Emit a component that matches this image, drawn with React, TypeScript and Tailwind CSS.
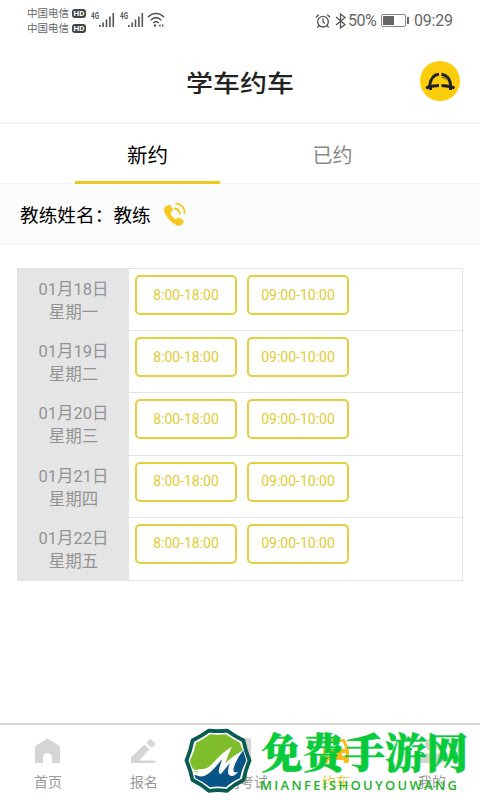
import { AlarmClock } from 'lucide-react';

const days = [
    { date: '01月18日', week: '星期一' },
    { date: '01月19日', week: '星期二' },
    { date: '01月20日', week: '星期三' },
    { date: '01月21日', week: '星期四' },
    { date: '01月22日', week: '星期五' },
];

const slots = ['8:00-18:00', '09:00-10:00'];

function Carrier() {
    return (
        <div className="flex items-center h-[15px] text-[10.5px] leading-[15px] text-[#666]">
            <span className="w-[42px] whitespace-nowrap">中国电信</span>
            <span className="ml-[3px] w-[14px] h-[9px] rounded-[3px] bg-[#444] text-white text-[8px] leading-[9px] font-bold text-center">HD</span>
        </div>
    );
}

function Signal() {
    return (
        <svg className="shrink-0" width="26" height="18" viewBox="0 0 26 18" fill="#555">
            <text x="0" y="8" fontSize="8.5" fontWeight="700" fontFamily="Roboto, sans-serif" textLength="8" lengthAdjust="spacingAndGlyphs">4G</text>
            <rect x="8" y="14" width="1.6" height="2" />
            <rect x="11.3" y="11.5" width="1.6" height="4.5" />
            <rect x="14.7" y="8.5" width="1.6" height="7.5" />
            <rect x="18.1" y="5.5" width="1.6" height="10.5" />
            <rect x="21.5" y="2" width="1.6" height="14" />
        </svg>
    );
}

function StatusBar() {
    return (
        <div className="flex items-start h-10 text-[#666]">
            <div className="ml-[27px] mt-[6px]">
                <Carrier />
                <Carrier />
            </div>
            <div className="flex ml-[5px] mt-[11px]">
                <Signal />
                <div className="ml-[3px] w-[26px]"><Signal /></div>
                <svg className="ml-[1px]" width="19" height="18" viewBox="0 0 19 18" fill="none" stroke="#555" strokeWidth="1.5">
                    <path d="M1 6.2C5.5 1.4 12.5 1.4 17 6.2M3.8 9.2C7 6 11 6 14.2 9.2M6.2 12C8 10.4 10 10.4 11.8 12" />
                    <circle cx="8" cy="14.5" r="1.2" fill="#555" stroke="none" />
                    <path d="M11.5 14.5l2-1.6v3.2zM17 14.5l-2-1.6v3.2z" fill="#555" stroke="none" />
                </svg>
            </div>
            <div className="flex items-center ml-auto mr-[27px] mt-[11px] h-[19px] text-[16px]">
                <AlarmClock className="text-[#555]" size={16} strokeWidth={2} />
                <svg className="ml-[4px]" width="11" height="16" viewBox="0 0 11 16" fill="none" stroke="#555" strokeWidth="1.3">
                    <path d="M1 4L10 11.5L5.5 15V1L10 4.5L1 12" />
                </svg>
                <span className="ml-[2px] w-[30px] tracking-[-0.5px]">50%</span>
                <div className="ml-[3px] w-[25px] h-[13px] rounded-[2px] border border-[#888] p-[1px]">
                    <div className="w-[11px] h-full bg-[#666]" />
                </div>
                <div className="w-[2px] h-[7px] ml-[1px] bg-[#666]" />
                <span className="ml-[5px] w-[39px] tracking-[-0.2px]">09:29</span>
            </div>
        </div>
    );
}

function CarBadge() {
    return (
        <svg width="40" height="40" viewBox="0 0 40 40">
            <circle cx="20" cy="20" r="20" fill="#fbcd0b" />
            <g fill="none" stroke="#222" strokeWidth="3">
                <path d="M9.5 25C10.5 17.5 14 13.7 19 13.3M21.5 13.3C27 14 30 18 30.8 25" />
                <path d="M8.5 25.7C12 25.7 15 24.5 19 24.4M21.5 24.4C25 24.5 28 25.7 32 25.7" />
            </g>
            <path d="M21.5 16.2C23.5 16.5 25 17.3 26.3 18.8" fill="none" stroke="#222" strokeWidth="0.8" />
            <circle cx="7.5" cy="26.5" r="1.8" fill="#222" />
            <circle cx="33" cy="26.5" r="1.8" fill="#222" />
            <path d="M9 25h3v4H9zM29 25h3v4h-3z" fill="#222" />
        </svg>
    );
}

function PhoneIcon() {
    return (
        <svg width="24" height="25" viewBox="0 0 24 25">
            <path
                d="M2.2 4.8L5.5 2.9Q6.8 2.4 7.6 3.6L9.6 7Q10.2 8.2 9 9.2L7.2 10.7C8.2 13.5 10.1 15.7 12.7 17.3L14.6 15.9Q15.7 15.2 16.9 16.1L20 18.3Q21.3 19.3 20.5 20.4C19 22.8 17.2 24.2 14.6 23.4C8.3 21.2 2.7 15 1 8.5Q.6 6 2.2 4.8Z"
                fill="#f7c81c"
            />
            <path d="M11.6 6.5C14.5 6.8 16.6 8.9 16.7 11.8M13.2 1.6C18.5 2 22 6 21.6 11.3" fill="none" stroke="#f7c81c" strokeWidth="1.8" strokeLinecap="round" />
        </svg>
    );
}

const navItems = [
    {
        label: '首页',
        icon: <path d="M12.5 0.5L23.3 7.3Q25 8.3 25 10V25H17V19.5a4.5 4.5 0 0 0-9 0V25H0V10Q0 8.3 1.7 7.3Z" />,
    },
    {
        label: '报名',
        icon: <path d="M0 25V19.5L13.5 6.5L18.5 11.5L8 22.4H24.5V25ZM15.3 4.7L18.5 1.6Q19.5.8 20.5 1.7L24 5.2Q24.7 6.1 23.9 7L20.5 9.8Z" />,
    },
    {
        label: '预约考试',
        icon: <path d="M4 0H21.5Q24 0 24 2V23Q24 25 22 25H4Q2 25 2 23V2Q2 0 4 0Z" />,
    },
    {
        label: '约车',
        active: true,
        icon: <path fillRule="evenodd" d="M6 1H20Q22 1 22.7 3L26 12V23Q26 25 24 25H22Q20.5 25 20.5 22H5.5Q5.5 25 4 25H2Q0 25 0 23V12L3.3 3Q4 1 6 1ZM6 4L3.5 11H22.5L20 4ZM3 15V18H7V15ZM19 15V18H23V15Z" />,
    },
    {
        label: '我的',
        icon: <path d="M12.5 0a6.5 6.5 0 1 1 0 13a6.5 6.5 0 1 1 0-13ZM1 25V19Q1 15.5 4.5 15.5H20.5Q24 15.5 24 19V25Z" />,
    },
];

function SiteLogo() {
    return (
        <svg width="68" height="66" viewBox="0 0 68 66">
            <path
                d="M25 2.6Q34 3.6 43 2.6Q50 8 59.5 12.5Q61.5 23 65.5 32.5Q61.5 42 59.5 52Q50 56.5 43 62.8Q34 61.4 25 62.8Q18 56.5 8.5 52Q6.5 42 2.5 32.5Q6.5 23 8.5 12.5Q18 8 25 2.6Z"
                fill="#fff"
                stroke="#075b50"
                strokeWidth="3.8"
                strokeLinejoin="round"
            />
            <g transform="translate(34 32.7) scale(1.07) translate(-34 -32.7)">
                <path d="M26.5 8Q34 8.8 41.5 8Q48 12.5 54.5 16Q56 20 57.5 24L44 34L24 46L12 43L8.5 36Q7.5 33 8.5 31Q12.5 23 13.5 16Q20 13 26.5 8Z" fill="#80bd2a" />
                <path d="M57.5 23Q59 28 60.5 32.5Q56 41 54.5 49Q47 52 41.5 57.5Q34 56 26.5 57.5Q20 52 13 49L12 46Q21 48 28 41L38 29L42 35L53 25Z" fill="#075486" />
                <path
                    d="M10 39Q12 43 17 40.5Q24 42 31 33Q38 25 47 19.5Q43 28 41 35Q48 28 58 22.5Q51 31 48.5 40Q48 45 53 43Q48 49 44.5 46Q42 44 45 35L37 45Q33 46 36 37L38 31Q30 41 25 45Q18 50 12 45Q15 46 16 43Q11 43 10 39Z"
                    fill="#fff"
                />
            </g>
        </svg>
    );
}

export default function App() {
    return (
        <div className="relative flex flex-col w-[480px] h-[800px] overflow-hidden bg-white font-[Roboto,'Noto_Sans_CJK_SC',sans-serif]">
            <StatusBar />

            {/* Page title */}
            <header className="flex items-center h-[84px] border-b-2 border-[#f5f5f5] pr-5">
                <div className="flex-1 pl-[60px] pt-[5px] text-center text-[27px] leading-[40px] font-medium text-[#222] scale-y-90">学车约车</div>
                <CarBadge />
            </header>

            {/* Tabs */}
            <div className="flex h-[60px] border-b border-[#f2f2f2] text-[20px] leading-[64px] text-center">
                <div className="ml-[75px] w-[145px] h-[60px] border-b-[3px] border-[#f0c91f] text-[20.5px] text-black">新约</div>
                <div className="ml-[40px] w-[145px] text-[#888]">已约</div>
            </div>

            <div className="flex items-center h-[61px] pl-5 bg-[#fcfcfc] border-b border-[#f3f3f3] text-[18.7px] text-black">
                <span className="pt-[5px] whitespace-nowrap">教练姓名：教练</span>
                <div className="ml-3"><PhoneIcon /></div>
            </div>

            {/* Schedule */}
            <div className="mt-[23px] ml-[17px] w-[446px] h-[313px] flex flex-col border border-[#e4e4e4]">
                {days.map((day, i) => (
                    <div key={day.date} className="flex flex-1">
                        <div className="w-[111px] pt-[9px] bg-[#e5e5e5] text-center text-[16.5px] leading-[23px] text-[#939393]">
                            <div>{day.date}</div>
                            <div>{day.week}</div>
                        </div>
                        <div className={`flex flex-1 gap-[10px] pl-[6px] pt-[6px] ${i < days.length - 1 ? 'border-b border-[#e4e4e4]' : ''}`}>
                            {slots.map((slot) => (
                                <button key={slot} className="w-[102px] h-[40px] rounded-[5px] border-2 border-[#e4d03f] text-[14px] text-[#e2cc34]">
                                    {slot}
                                </button>
                            ))}
                        </div>
                    </div>
                ))}
            </div>

            {/* Bottom nav */}
            <nav className="flex mt-auto h-[77px] border-t-2 border-[#d6d6d6]">
                {navItems.map((item) => (
                    <div key={item.label} className="flex flex-col items-center w-24 pt-[13px]">
                        <svg width="26" height="26" viewBox="0 0 26 26" fill={item.active ? '#fbb91e' : '#d5d5d5'}>{item.icon}</svg>
                        <span className={`mt-[8px] text-[14px] leading-[20px] ${item.active ? 'text-[#e2cc34]' : 'text-[#999]'}`}>{item.label}</span>
                    </div>
                ))}
            </nav>

            {/* Site mark over the nav */}
            <div className="absolute left-[184px] top-[728px] flex">
                <SiteLogo />
                <svg className="overflow-visible" width="228" height="70" viewBox="0 0 228 70" fill="#08cb3b">
                    <text x="9" y="40" fontSize="41" fontWeight="900" fontFamily="'Noto Serif CJK SC', 'Noto Sans CJK SC', serif" textLength="207" lengthAdjust="spacingAndGlyphs" stroke="#08cb3b" strokeWidth="0.6">免费手游网</text>
                    <text x="8" y="61.5" fontSize="13" fontWeight="600" fontFamily="'Open Sans', sans-serif" textLength="197" fill="#1fb22d">MIANFEISHOUYOUWANG</text>
                </svg>
            </div>
        </div>
    );
}
